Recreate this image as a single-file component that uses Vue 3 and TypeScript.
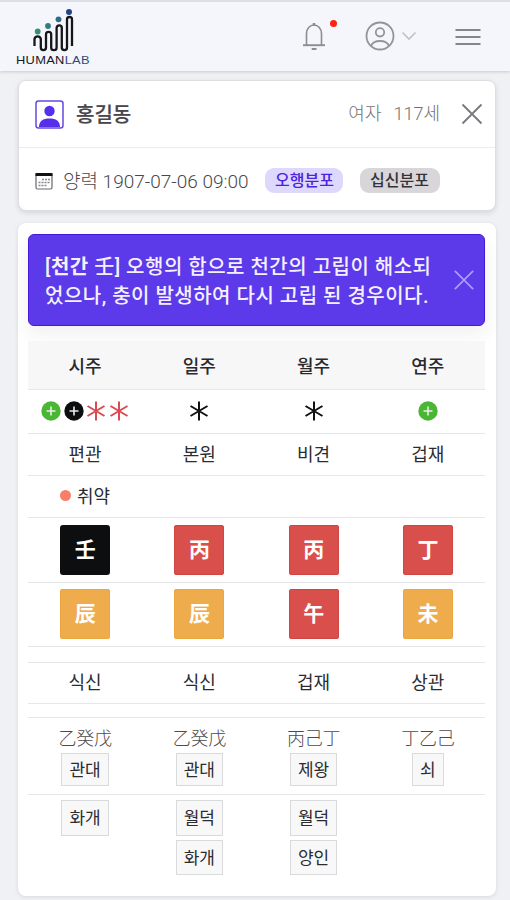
<script setup lang="ts">
type Mark = 'green' | 'black' | 'red-star' | 'black-star'
interface Tile { char: string; tone: 'black' | 'red' | 'amber' }
interface Pillar {
  name: string
  marks: Mark[]
  topGod: string
  state: string
  stem: Tile
  branch: Tile
  bottomGod: string
  hidden: string
  stage: string
  stars: string[]
}

const pillars: Pillar[] = [
  {
    name: '시주', marks: ['green', 'black', 'red-star', 'red-star'], topGod: '편관', state: '취약',
    stem: { char: '壬', tone: 'black' }, branch: { char: '辰', tone: 'amber' },
    bottomGod: '식신', hidden: '乙癸戊', stage: '관대', stars: ['화개'],
  },
  {
    name: '일주', marks: ['black-star'], topGod: '본원', state: '',
    stem: { char: '丙', tone: 'red' }, branch: { char: '辰', tone: 'amber' },
    bottomGod: '식신', hidden: '乙癸戊', stage: '관대', stars: ['월덕', '화개'],
  },
  {
    name: '월주', marks: ['black-star'], topGod: '비견', state: '',
    stem: { char: '丙', tone: 'red' }, branch: { char: '午', tone: 'red' },
    bottomGod: '겁재', hidden: '丙己丁', stage: '제왕', stars: ['월덕', '양인'],
  },
  {
    name: '연주', marks: ['green'], topGod: '겁재', state: '',
    stem: { char: '丁', tone: 'red' }, branch: { char: '未', tone: 'amber' },
    bottomGod: '상관', hidden: '丁乙己', stage: '쇠', stars: [],
  },
]
</script>

<template>
  <div class="page">
    <header class="topbar">
      <div class="brand">
        <svg class="brand-mark" viewBox="0 0 42 46" width="42" height="46">
          <path d="M2.500 38V31a3.200 3.200 0 0 1 6.300 0V39.500a2.600 2.600 0 0 0 5.200 0V26.500a2.600 2.600 0 0 1 5.200 0v13a2.700 2.700 0 0 0 5.400 0V20a2.600 2.600 0 0 1 5.200 0v19.500a2.600 2.600 0 0 0 5.200 0V11.500a2.500 2.500 0 0 1 5 0V38" fill="none" stroke="#15161a" stroke-width="2.300" />
          <circle cx="5.700" cy="23.500" r="2.900" fill="#348f79" />
          <circle cx="16" cy="18" r="2.900" fill="#337b83" />
          <circle cx="26.500" cy="11.300" r="2.900" fill="#2e6b8c" />
          <circle cx="37" cy="4" r="3" fill="#24458c" />
        </svg>
        <div class="brand-name"><span>HUMAN</span><span class="lab">LAB</span></div>
      </div>
      <nav class="tools">
        <div class="bell">
          <svg viewBox="0 0 24 30" width="24" height="30" fill="none" stroke="#8b8d92" stroke-width="1.600">
            <path d="M4.500 24V12.500a7.500 8.500 0 0 1 15 0V24" />
            <path d="M1 24.200h22" stroke-width="1.900" />
            <path d="M12 2v3" stroke-width="2.600" />
            <path d="M9.700 28h4.800" stroke-width="2" />
          </svg>
          <span class="dot"></span>
        </div>
        <div class="account">
          <svg viewBox="0 0 30 30" width="30" height="30" fill="none" stroke="#929499" stroke-width="1.800">
            <circle cx="15" cy="15" r="13.500" />
            <circle cx="15" cy="11.300" r="4.200" />
            <path d="M6 25c1.300-3.600 4.500-5 9-5s7.700 1.400 9 5" />
          </svg>
          <svg class="caret" viewBox="0 0 16 10" width="16" height="10" fill="none" stroke="#bfc1c6" stroke-width="1.600">
            <path d="M1.500 1.500L8 8l6.500-6.500" />
          </svg>
        </div>
        <svg class="burger" viewBox="0 0 26 18" width="26" height="18" stroke="#84868b" stroke-width="1.900">
          <path d="M.500 2h25M.500 9h25M.500 16h25" />
        </svg>
      </nav>
    </header>

    <section class="card profile">
      <div class="profile-head">
        <svg class="avatar" viewBox="0 0 29 29" width="29" height="29">
          <rect x="1" y="1" width="27" height="27" rx="2.500" fill="#fff" stroke="#6549e2" stroke-width="1.500" />
          <circle cx="14.500" cy="11" r="5.200" fill="#562fea" />
          <path d="M4 27c0-6 4-8.500 10.500-8.500S25 21 25 27z" fill="#562fea" />
        </svg>
        <strong class="person">홍길동</strong>
        <span class="gender">여자</span>
        <span class="age">117세</span>
        <svg class="close" viewBox="0 0 22 22" width="22" height="22" stroke="#77797d" stroke-width="1.800">
          <path d="M1.500 1.500l19 19M20.500 1.500l-19 19" />
        </svg>
      </div>
      <div class="profile-body">
        <svg class="calendar" viewBox="0 0 18 18" width="18" height="18">
          <rect x="1" y="1.500" width="16" height="15.500" rx="1.500" fill="#fff" stroke="#66686c" stroke-width="1.200" />
          <path d="M.500 2.500h17" stroke="#111" stroke-width="3" />
          <path d="M7 7.500h8M3.500 10.500H15M3.500 13.500h8" stroke="#85878c" stroke-width="1.500" stroke-dasharray="2 1" />
        </svg>
        <span class="birth">양력 1907-07-06 09:00</span>
        <span class="pill violet">오행분포</span>
        <span class="pill grey">십신분포</span>
      </div>
    </section>

    <main class="card chart">
      <div class="notice">
        <p>[<b>천간</b> 壬] 오행의 합으로 천간의 고립이 해소되<br>었으나, 충이 발생하여 다시 고립 된 경우이다.</p>
        <svg viewBox="0 0 22 22" width="22" height="22" stroke="#ab9cf5" stroke-width="1.700">
          <path d="M1.800 1.800l18.400 18.400M20.200 1.800L1.800 20.200" />
        </svg>
      </div>

      <div class="table">
        <div class="row head"><div v-for="(p, i) in pillars" :key="i">{{ p.name }}</div></div>
        <div class="row marks">
          <div v-for="(p, i) in pillars" :key="i">
            <template v-for="(m, j) in p.marks" :key="j">
              <svg v-if="m === 'green' || m === 'black'" :class="m" viewBox="0 0 20 20" width="20" height="20">
                <circle cx="10" cy="10" r="9.700" />
                <path d="M10 5.500v9M5.500 10h9" />
              </svg>
              <svg v-else :class="m" viewBox="0 0 20 20" width="20" height="20">
                <path d="M10 .500v19M1.500 5l17 10M18.500 5l-17 10" />
              </svg>
            </template>
          </div>
        </div>
        <div class="row god"><div v-for="(p, i) in pillars" :key="i">{{ p.topGod }}</div></div>
        <div class="row state">
          <div v-for="(p, i) in pillars" :key="i"><template v-if="p.state"><i></i>{{ p.state }}</template></div>
        </div>
        <div class="row stem">
          <div v-for="(p, i) in pillars" :key="i"><span class="tile" :class="p.stem.tone">{{ p.stem.char }}</span></div>
        </div>
        <div class="row branch">
          <div v-for="(p, i) in pillars" :key="i"><span class="tile" :class="p.branch.tone">{{ p.branch.char }}</span></div>
        </div>
        <div class="row gap-a"></div>
        <div class="row god lower"><div v-for="(p, i) in pillars" :key="i">{{ p.bottomGod }}</div></div>
        <div class="row gap-b"></div>
        <div class="row hidden">
          <div v-for="(p, i) in pillars" :key="i">
            <span class="hanja">{{ p.hidden }}</span>
            <span class="chip">{{ p.stage }}</span>
          </div>
        </div>
        <div class="row stars">
          <div v-for="(p, i) in pillars" :key="i"><span v-for="s in p.stars" :key="s" class="chip">{{ s }}</span></div>
        </div>
      </div>
    </main>
  </div>
</template>

<style>
body { background: #f0f1f5; }
</style>

<style scoped>
* { box-sizing: border-box; }
.page {
  width: 510px;
  height: 900px;
  overflow: hidden;
  background: #f0f1f5;
  font-family: Roboto, "Noto Sans CJK KR", sans-serif;
  color: #2b2c31;
}
svg { display: block; flex: none; }
.topbar {
  height: 71px;
  display: flex;
  justify-content: space-between;
  background: #f4f6fb;
  border-top: 2px solid #dddfe4;
  box-shadow: 0 1px 3px rgba(40, 42, 55, .2);
}
.brand { width: 74px; margin-left: 16px; padding-top: 6px; }
.brand-mark { margin-left: 16px; }
.brand-name {
  display: flex;
  margin-top: -1px;
  font: 400 11px/14px "Liberation Sans", sans-serif;
  letter-spacing: .25px;
  color: #17181c;
  transform: scaleX(1.17);
  transform-origin: left;
}
.lab { color: #2f4c78; }
.tools { display: flex; align-items: flex-start; padding-right: 29px; }
.bell { display: flex; margin: 19px 28px 0 0; }
.dot { width: 7px; height: 7px; margin: -1px 0 0 4px; border-radius: 50%; background: #fb2411; }
.account { display: flex; align-items: center; margin: 19px 38px 0 0; }
.caret { margin-left: 6px; }
.burger { margin-top: 26px; }

.card { background: #fff; border-radius: 8px; }
.profile {
  width: 478px;
  height: 131px;
  margin: 9px 0 0 18px;
  border: 1px solid #dddee2;
  box-shadow: 0 2px 5px rgba(40, 42, 55, .13);
}
.profile-head { height: 67px; display: flex; align-items: center; padding: 0 12px 0 16px; border-bottom: 1px solid #ececef; }
.person { margin: -2px auto 0 12px; font-size: 20px; font-weight: 500; -webkit-text-stroke: .2px; color: #48464b; }
.gender, .age { margin-top: -4px; font-size: 18px; font-weight: 300; color: #74716f; }
.age { margin: -4px 21px 0 12px; }
.profile-body { height: 63px; display: flex; align-items: center; padding: 2px 0 0 16px; }
.birth { width: 187px; margin: -3px 0 0 10px; font-size: 19px; font-weight: 300; color: #49494c; white-space: nowrap; }
.pill { height: 25px; padding: 0 10px; border-radius: 9px; font-size: 16px; line-height: 25px; font-weight: 500; white-space: nowrap; }
.violet { width: 78px; margin-left: 15px; background: #ddd8fc; color: #4b22df; }
.grey { width: 80px; margin-left: 17px; background: #d8d6d8; color: #343238; }

.chart {
  width: 478px;
  height: 673px;
  margin: 12px 0 0 18px;
  padding: 11px 11px 0 10px;
  box-shadow: 0 1px 4px rgba(40, 42, 55, .12);
}
.notice {
  height: 92px;
  display: flex;
  align-items: center;
  justify-content: space-between;
  padding: 0 9px 0 16px;
  border: 1px solid #4818d8;
  border-radius: 6px;
  background: #5c39e9;
  box-shadow: 0 8px 18px rgba(40, 42, 35, .07);
  color: #f4f1ff;
}
.notice p { margin: 3px 0 0; font-size: 20px; line-height: 29px; letter-spacing: .5px; font-weight: 500; white-space: nowrap; }
.notice b { font-weight: 700; }

.table { padding-top: 15px; }
.row { display: grid; grid-template-columns: repeat(4, 1fr); border-bottom: 1.500px solid #e6e7ea; font-size: 18px; }
.row > div { display: flex; align-items: center; justify-content: center; }
.head { height: 49px; background: #f7f7f7; font-weight: 500; color: #29292d; }
.marks { height: 44px; padding-bottom: 1px; }
.marks > div { gap: 2.500px; }
.marks circle { fill: #49b734; }
.black circle { fill: #0c0d0f; }
.marks path { fill: none; stroke-width: 2; stroke: #111; }
.marks .green path, .marks .black path { stroke: #e9eee7; stroke-width: 1.600; }
.marks .red-star path { stroke: #d94b50; }
.god { height: 42px; padding-bottom: 4px; }
.state { height: 42px; padding-bottom: 3px; }
.state i { width: 11px; height: 11px; margin-right: 6px; border-radius: 50%; background: #fb7d66; }
.stem { height: 65px; }
.branch { height: 64px; padding-bottom: 1px; }
.tile { width: 50px; height: 50px; border-radius: 3px; color: #fff; font-size: 21px; font-weight: 700; line-height: 51px; text-align: center; }
.tile.black { background: #0d0e0f; }
.tile.red { background: #d94f4c; box-shadow: inset 0 0 0 1px #d14542; }
.tile.amber { background: #efac4c; box-shadow: inset 0 0 0 1px #eba63d; }
.gap-a { height: 16px; }
.lower { height: 41px; }
.gap-b { height: 14px; }
.hidden { height: 77px; }
.hidden > div { flex-direction: column; justify-content: flex-start; padding-top: 8px; }
.hanja { height: 27px; line-height: 26px; font-size: 18px; letter-spacing: -.3px; font-weight: 300; color: #4b4b4f; }
.chip { height: 33px; padding: 0 7px; border: 1px solid #d9dadb; background: #f8f8f8; font-size: 17px; line-height: 32px; }
.stars { border: 0; }
.stars > div { flex-direction: column; justify-content: flex-start; padding-top: 5px; gap: 4px; }
.stars .chip { height: 36px; line-height: 34px; }
.stars .chip + .chip { height: 35px; }
</style>
